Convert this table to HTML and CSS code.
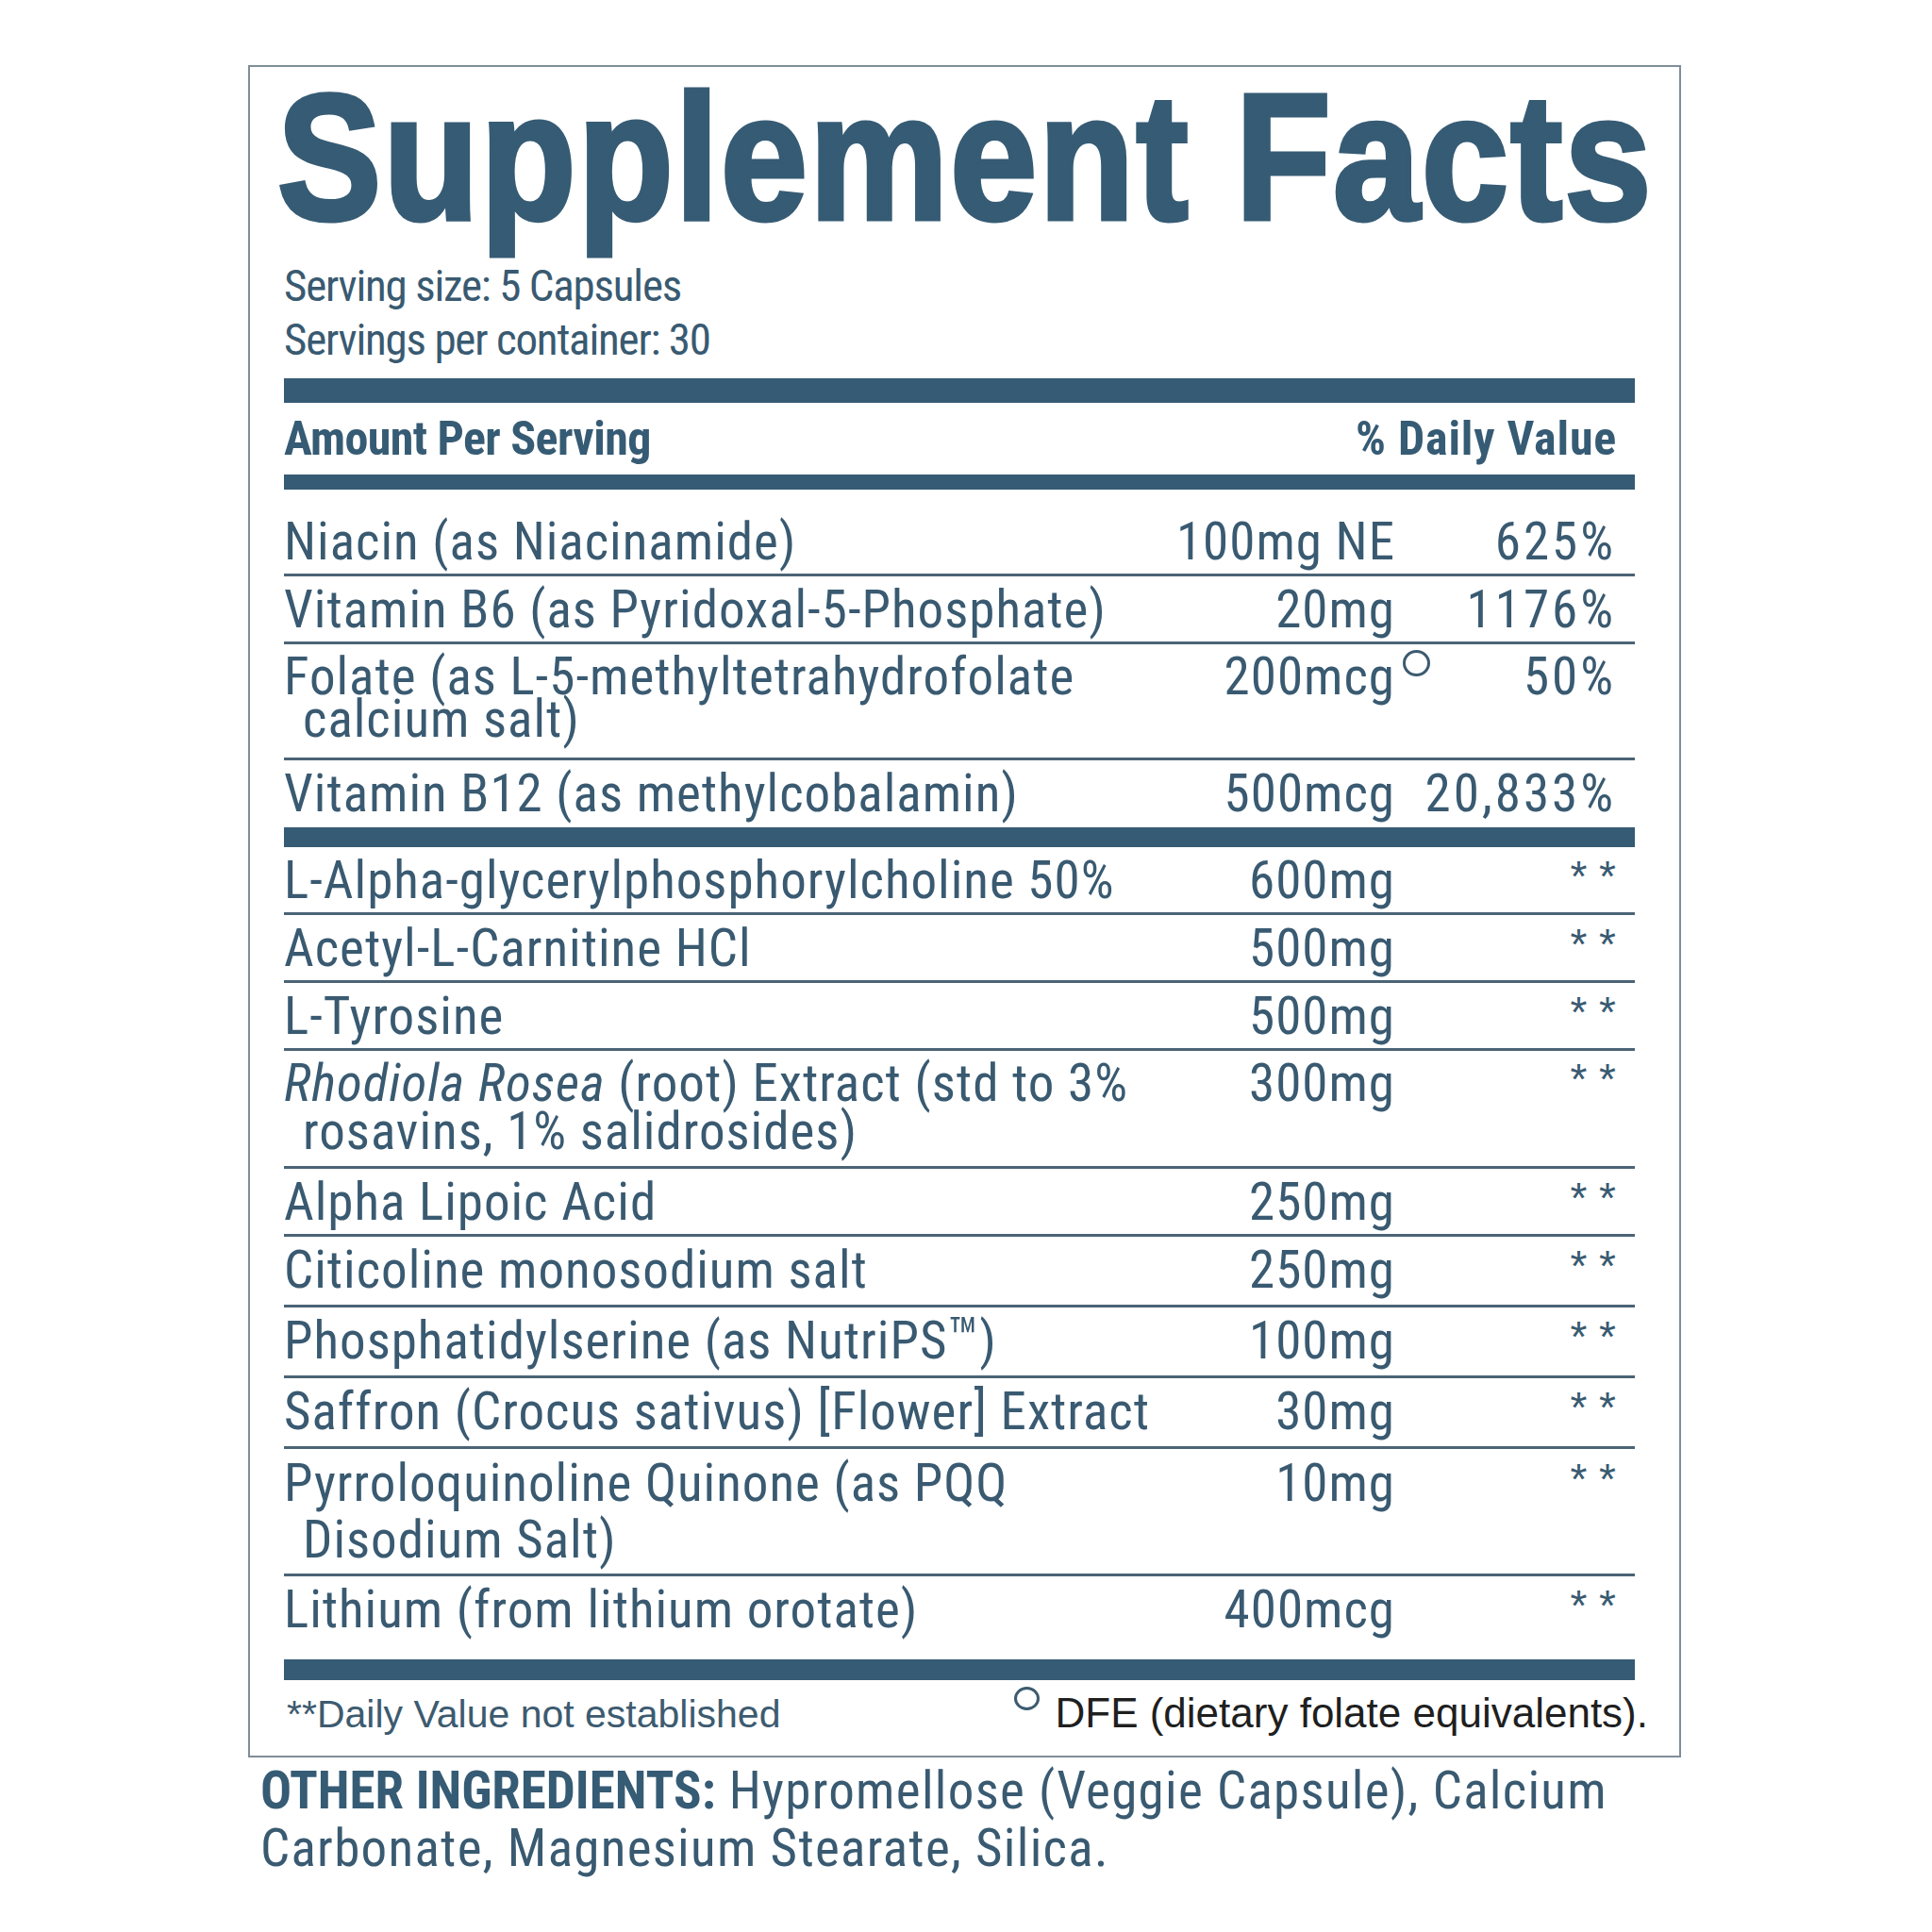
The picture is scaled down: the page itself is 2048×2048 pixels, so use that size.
FILE: index.html
```html
<!DOCTYPE html>
<html lang="en">
<head>
<meta charset="utf-8">
<title>Supplement Facts</title>
<link rel="stylesheet" href="styles.css">
</head>
<body>
<div class="page">
  <section class="label">
    <h1 class="title">Supplement Facts</h1>
    <div class="serving">
      <div>Serving size: 5 Capsules</div>
      <div>Servings per container: 30</div>
    </div>
    <div class="bar bar-xl"></div>
    <div class="head"><span class="head-l">Amount Per Serving</span><span class="head-r">% Daily Value</span></div>
    <div class="bar bar-sm"></div>

    <div class="row first"><div class="name">Niacin (as Niacinamide)</div><div class="amt">100mg NE</div><div class="dv">625%</div></div>
    <div class="row"><div class="name">Vitamin B6 (as Pyridoxal-5-Phosphate)</div><div class="amt">20mg</div><div class="dv">1176%</div></div>
    <div class="row r-folate"><div class="name">Folate (as L-5-methyltetrahydrofolate<br>calcium salt)</div><div class="amt">200mcg<span class="ring ring-amt"></span></div><div class="dv">50%</div></div>
    <div class="row end"><div class="name">Vitamin B12 (as methylcobalamin)</div><div class="amt">500mcg</div><div class="dv">20,833%</div></div>
    <div class="bar bar-md"></div>

    <div class="row"><div class="name">L-Alpha-glycerylphosphorylcholine 50%</div><div class="amt">600mg</div><div class="dv"><span class="na">* *</span></div></div>
    <div class="row"><div class="name">Acetyl-L-Carnitine HCl</div><div class="amt">500mg</div><div class="dv"><span class="na">* *</span></div></div>
    <div class="row"><div class="name">L-Tyrosine</div><div class="amt">500mg</div><div class="dv"><span class="na">* *</span></div></div>
    <div class="row r-rh"><div class="name"><em>Rhodiola Rosea</em> (root) Extract (std to 3%<br>rosavins, 1% salidrosides)</div><div class="amt">300mg</div><div class="dv"><span class="na">* *</span></div></div>
    <div class="row"><div class="name">Alpha Lipoic Acid</div><div class="amt">250mg</div><div class="dv"><span class="na">* *</span></div></div>
    <div class="row tall"><div class="name">Citicoline monosodium salt</div><div class="amt">250mg</div><div class="dv"><span class="na">* *</span></div></div>
    <div class="row tall"><div class="name">Phosphatidylserine (as NutriPS<span class="tm">™</span>)</div><div class="amt">100mg</div><div class="dv"><span class="na">* *</span></div></div>
    <div class="row tall"><div class="name">Saffron (Crocus sativus) [Flower] Extract</div><div class="amt">30mg</div><div class="dv"><span class="na">* *</span></div></div>
    <div class="row r-pqq"><div class="name">Pyrroloquinoline Quinone (as PQQ<br>Disodium Salt)</div><div class="amt">10mg</div><div class="dv"><span class="na">* *</span></div></div>
    <div class="row last"><div class="name">Lithium (from lithium orotate)</div><div class="amt">400mcg</div><div class="dv"><span class="na">* *</span></div></div>
    <div class="bar bar-lg"></div>

    <div class="foot">
      <span class="foot-na">**Daily Value not established</span>
      <span class="foot-dfe"><span class="ring ring-foot"></span>DFE (dietary folate equivalents).</span>
    </div>
  </section>
  <p class="other"><b>OTHER INGREDIENTS:</b> Hypromellose (Veggie Capsule), Calcium Carbonate, Magnesium Stearate, Silica.</p>
</div>
</body>
</html>
```
FILE: styles.css
```css
html, body {
  margin: 0;
  padding: 0;
  background: #ffffff;
}

.page {
  padding: 69px 0 0 263px;
  width: 1519px;
  font-family: "Roboto Condensed", "Open Sans", "Liberation Sans", sans-serif;
  color: #395a71;
}

.label {
  border: 2px solid #7f8e99;
  padding: 0 47px 0 36px;
}

.title {
  margin: 0 0 0 -7px;
  font-family: "Liberation Sans", Arial, sans-serif;
  font-weight: 700;
  font-size: 190px;
  line-height: 190px;
  letter-spacing: 2.5px;
  white-space: nowrap;
  transform: scaleX(0.87);
  transform-origin: 0 0;
  color: #365b74;
  -webkit-text-stroke: 5px #365b74;
}

.serving {
  margin-top: 13px;
  font-size: 47px;
  line-height: 57px;
  letter-spacing: -1.2px;
}

.bar {
  background: #365b74;
}
.bar-xl { height: 26px; margin-top: 13px; }
.bar-sm { height: 16px; }
.bar-md { height: 21px; }
.bar-lg { height: 22px; }

.head {
  display: flex;
  justify-content: space-between;
  padding-right: 20px;
  height: 76px;
  line-height: 76px;
  font-size: 50px;
  font-weight: 700;
  color: #365b74;
}
.head-l { letter-spacing: -0.6px; }
.head-r { letter-spacing: 0.8px; margin-right: -1px; }

.row {
  display: grid;
  grid-template-columns: 1fr auto 232px;
  padding: 12px 22px 11px 0;
  border-bottom: 3px solid #4b6476;
  font-size: 55px;
  line-height: 46px;
  letter-spacing: 1px;
}
.row.first { padding-top: 32px; }
.row.r-folate { padding-top: 12px; padding-bottom: 18px; line-height: 45px; }
.row.end { border-bottom: 0; padding-bottom: 13px; }
.row.r-rh { padding-top: 9px; line-height: 51px; }
.row.tall { padding-bottom: 14px; }
.row.r-pqq { padding-top: 6px; padding-bottom: 6px; line-height: 60px; }
.row.last { border-bottom: 0; padding-bottom: 30px; }

.name {
  padding-left: 20px;
  text-indent: -20px;
  white-space: nowrap;
}

.tm {
  font-size: 1.12em;
  line-height: 0;
  letter-spacing: 0;
}

.amt, .dv {
  text-align: right;
  white-space: nowrap;
}
.amt { position: relative; }
.dv {
  letter-spacing: 3px;
  margin-right: -2px;
}

.na {
  font-family: "Liberation Sans", Arial, sans-serif;
  font-size: 46px;
  line-height: 0;
  letter-spacing: 0;
  vertical-align: 7px;
}

.ring {
  display: inline-block;
  box-sizing: border-box;
  border: 3px solid #3d5b70;
  border-radius: 50%;
}
.ring-amt {
  position: absolute;
  left: calc(100% + 8px);
  top: -6px;
  width: 29px;
  height: 28px;
}
.ring-foot {
  width: 27px;
  height: 25px;
  margin-right: 16px;
  vertical-align: 18px;
}

.foot {
  display: flex;
  justify-content: space-between;
  align-items: baseline;
  margin-top: 7px;
  padding-bottom: 19px;
  line-height: 50px;
  font-family: "Liberation Sans", Arial, sans-serif;
}
.foot-na {
  font-size: 41px;
  color: #3d5b70;
  margin-left: 3px;
}
.foot-dfe {
  font-size: 44px;
  color: #1f1f1f;
  margin-right: -14px;
}

.other {
  margin: 5px 0 0 13px;
  font-size: 55px;
  line-height: 61px;
  letter-spacing: 1.3px;
}
.other b {
  letter-spacing: 0;
  color: #365b74;
}
```
